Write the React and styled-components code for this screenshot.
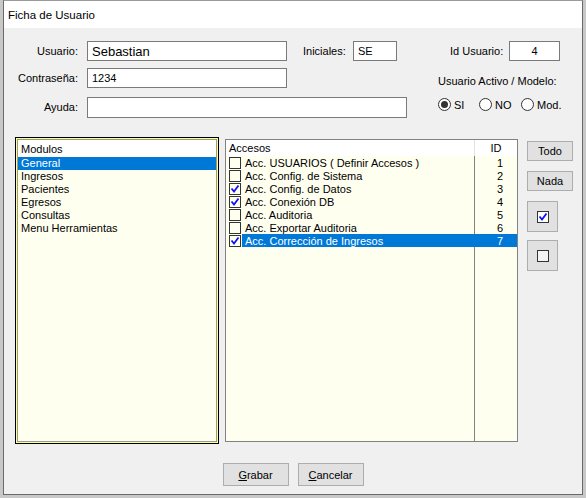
import React from 'react';
import styled, { createGlobalStyle } from 'styled-components';

const GlobalStyle = createGlobalStyle`
  html, body {
    margin: 0;
    padding: 0;
    background: #c8c8c8;
  }
  body {
    font-family: "Liberation Sans", Arial, sans-serif;
    font-size: 11px;
    color: #000;
  }
  * { box-sizing: border-box; }
`;

const Window = styled.div`
  width: 580px;
  height: 495px;
  margin-left: 3px;
  border: 1px solid #6a6a6a;
  border-top-color: #9a9a9a;
  background: #f0f0f0;
  display: flex;
  flex-direction: column;
`;

const TitleBar = styled.div`
  height: 27px;
  background: #fff;
  display: flex;
  align-items: center;
  padding-left: 4px;
  font-size: 11.5px;
`;

const Body = styled.div`
  flex: 1;
  padding-top: 13px;
  display: flex;
  flex-direction: column;
`;

const FormRow = styled.div`
  display: flex;
  align-items: center;
  height: ${p => p.$h || 20}px;
  margin-top: ${p => p.$mt || 0}px;
`;

const FieldLabel = styled.div`
  width: 74px;
  text-align: right;
  flex-shrink: 0;
  line-height: 13px;
`;

const InlineLabel = styled.div`
  width: ${p => p.$w}px;
  margin-left: ${p => p.$ml}px;
  flex-shrink: 0;
  line-height: 13px;
  white-space: nowrap;
`;

const TextBox = styled.div`
  width: ${p => p.$w}px;
  height: 100%;
  margin-left: ${p => p.$ml}px;
  border: 1px solid #7a7a7a;
  background: #fff;
  padding: 0 4px;
  display: flex;
  align-items: center;
  justify-content: ${p => (p.$center ? 'center' : 'flex-start')};
  font-size: ${p => (p.$large ? 13 : 11)}px;
  flex-shrink: 0;
`;

const GroupCaption = styled.div`
  margin-left: 151px;
  align-self: flex-end;
  line-height: 13px;
  white-space: nowrap;
`;

const RadioGroup = styled.div`
  margin-left: 31px;
  align-self: flex-start;
  margin-top: 1px;
  display: flex;
  align-items: center;
`;

const RadioItem = styled.div`
  width: ${p => (p.$w ? `${p.$w}px` : 'auto')};
  display: flex;
  align-items: center;
  gap: 3px;
  white-space: nowrap;
`;

const RadioCircle = styled.span`
  width: 13px;
  height: 13px;
  border-radius: 50%;
  border: 1px solid #333;
  background: #fff;
  display: flex;
  align-items: center;
  justify-content: center;
  flex-shrink: 0;
  &::after {
    content: '';
    width: 7px;
    height: 7px;
    border-radius: 50%;
    background: ${p => (p.$on ? '#333' : 'transparent')};
  }
`;

const ListsArea = styled.div`
  display: flex;
  align-items: flex-start;
  margin-top: 19px;
  padding-left: 11px;
`;

const FocusFrame = styled.div`
  width: 204px;
  height: 307px;
  border: 1px solid #000;
  padding: 1px;
  background: #ffff8a;
`;

const ListBox = styled.div`
  height: 100%;
  border: 1px solid #9a9a9a;
  background: #fffff0;
  display: flex;
  flex-direction: column;
`;

const ListHeader = styled.div`
  height: 17px;
  background: #fff;
  padding-left: 3px;
  display: flex;
  align-items: center;
`;

const ListItem = styled.div`
  height: 13px;
  line-height: 13px;
  padding-left: 3px;
  background: ${p => (p.$sel ? '#0078d7' : 'transparent')};
  color: ${p => (p.$sel ? '#fff' : '#000')};
  white-space: nowrap;
`;

const GridBox = styled.div`
  width: 293px;
  height: 303px;
  margin-left: 6px;
  margin-top: 2px;
  border: 1px solid #828282;
  background: #fffff0;
  display: flex;
  flex-direction: column;
`;

const GridRow = styled.div`
  display: grid;
  grid-template-columns: 248px 1fr;
  height: ${p => (p.$h ? `${p.$h}px` : 'auto')};
  flex: ${p => (p.$fill ? 1 : 'none')};
  background: ${p => (p.$head ? '#fff' : 'transparent')};
`;

const NameCell = styled.div`
  display: flex;
  align-items: center;
  white-space: nowrap;
  overflow: hidden;
`;

const NameText = styled.div`
  flex: 1;
  height: 100%;
  display: flex;
  align-items: center;
  padding-left: 3px;
  margin-left: ${p => p.$ml || 0}px;
  background: ${p => (p.$sel ? '#0078d7' : 'transparent')};
  color: ${p => (p.$sel ? '#fff' : '#000')};
`;

const IdCell = styled.div`
  border-left: 1px solid ${p => (p.$head ? '#e3e3e3' : p.$sel ? '#0078d7' : '#828282')};
  display: flex;
  align-items: center;
  justify-content: ${p => (p.$head ? 'center' : 'flex-end')};
  padding-right: ${p => (p.$head ? 0 : 14)}px;
  background: ${p => (p.$sel ? '#0078d7' : 'transparent')};
  color: ${p => (p.$sel ? '#fff' : '#000')};
`;

const Check = styled.span`
  width: 12px;
  height: 12px;
  border: 1px solid #333;
  background: ${p => p.$bg || '#fffff0'};
  margin-left: ${p => p.$ml || 0}px;
  display: flex;
  align-items: center;
  justify-content: center;
  flex-shrink: 0;
`;

const SideButtons = styled.div`
  margin-left: 9px;
  margin-top: 4px;
  display: flex;
  flex-direction: column;
  align-items: flex-start;
`;

const Button = styled.button`
  width: ${p => p.$w}px;
  height: ${p => p.$h}px;
  margin-top: ${p => p.$mt || 0}px;
  background: #e1e1e1;
  border: 1px solid #adadad;
  border-radius: 0;
  padding: 0;
  font-family: "Liberation Sans", Arial, sans-serif;
  font-size: 11px;
  color: #000;
  display: flex;
  align-items: center;
  justify-content: center;
`;

const Footer = styled.div`
  display: flex;
  justify-content: center;
  gap: 9px;
  margin-top: 19px;
`;

const CheckMark = () => (
  <svg width="10" height="10" viewBox="0 0 10 10">
    <polyline points="1.5,4.5 4,7.5 8.5,1.5" fill="none" stroke="#1010ff" strokeWidth="1.8" />
  </svg>
);

const modulos = ['General', 'Ingresos', 'Pacientes', 'Egresos', 'Consultas', 'Menu Herramientas'];

const accesos = [
  { name: 'Acc. USUARIOS ( Definir Accesos )', id: 1, on: false },
  { name: 'Acc. Config. de Sistema', id: 2, on: false },
  { name: 'Acc. Config. de Datos', id: 3, on: true },
  { name: 'Acc. Conexión DB', id: 4, on: true },
  { name: 'Acc. Auditoria', id: 5, on: false },
  { name: 'Acc. Exportar Auditoria', id: 6, on: false },
  { name: 'Acc. Corrección de Ingresos', id: 7, on: true },
];

export default function App() {
  const selected = 7;
  return (
    <>
      <GlobalStyle />
      <Window>
        <TitleBar>Ficha de Usuario</TitleBar>
        <Body>
          <FormRow>
            <FieldLabel>Usuario:</FieldLabel>
            <TextBox $w={200} $ml={9} $large>Sebastian</TextBox>
            <InlineLabel $w={43} $ml={16}>Iniciales:</InlineLabel>
            <TextBox $w={44} $ml={7}>SE</TextBox>
            <InlineLabel $w={51} $ml={53}>Id Usuario:</InlineLabel>
            <TextBox $w={51} $ml={8} $center>4</TextBox>
          </FormRow>
          <FormRow $mt={7}>
            <FieldLabel>Contraseña:</FieldLabel>
            <TextBox $w={200} $ml={9}>1234</TextBox>
            <GroupCaption>Usuario Activo / Modelo:</GroupCaption>
          </FormRow>
          <FormRow $mt={9} $h={21}>
            <FieldLabel>Ayuda:</FieldLabel>
            <TextBox $w={320} $ml={9} />
            <RadioGroup>
              <RadioItem $w={41}><RadioCircle $on />SI</RadioItem>
              <RadioItem $w={42}><RadioCircle />NO</RadioItem>
              <RadioItem><RadioCircle />Mod.</RadioItem>
            </RadioGroup>
          </FormRow>

          <ListsArea>
            <FocusFrame>
              <ListBox>
                <ListHeader>Modulos</ListHeader>
                {modulos.map((m, i) => (
                  <ListItem key={m} $sel={i === 0}>{m}</ListItem>
                ))}
              </ListBox>
            </FocusFrame>

            <GridBox>
              <GridRow $head $h={16}>
                <NameCell><NameText>Accesos</NameText></NameCell>
                <IdCell $head>ID</IdCell>
              </GridRow>
              {accesos.map(a => (
                <GridRow key={a.id} $h={13}>
                  <NameCell>
                    <Check $ml={3}>{a.on && <CheckMark />}</Check>
                    <NameText $ml={1} $sel={a.id === selected}>{a.name}</NameText>
                  </NameCell>
                  <IdCell $sel={a.id === selected}>{a.id}</IdCell>
                </GridRow>
              ))}
              <GridRow $fill>
                <div />
                <IdCell />
              </GridRow>
            </GridBox>

            <SideButtons>
              <Button $w={46} $h={20}>Todo</Button>
              <Button $w={46} $h={20} $mt={10}>Nada</Button>
              <Button $w={31} $h={31} $mt={10}>
                <Check $bg="#fff"><CheckMark /></Check>
              </Button>
              <Button $w={31} $h={31} $mt={8}>
                <Check $bg="#f4f4f4" />
              </Button>
            </SideButtons>
          </ListsArea>

          <Footer>
            <Button $w={66} $h={23}><u>G</u>rabar</Button>
            <Button $w={66} $h={23}><u>C</u>ancelar</Button>
          </Footer>
        </Body>
      </Window>
    </>
  );
}
